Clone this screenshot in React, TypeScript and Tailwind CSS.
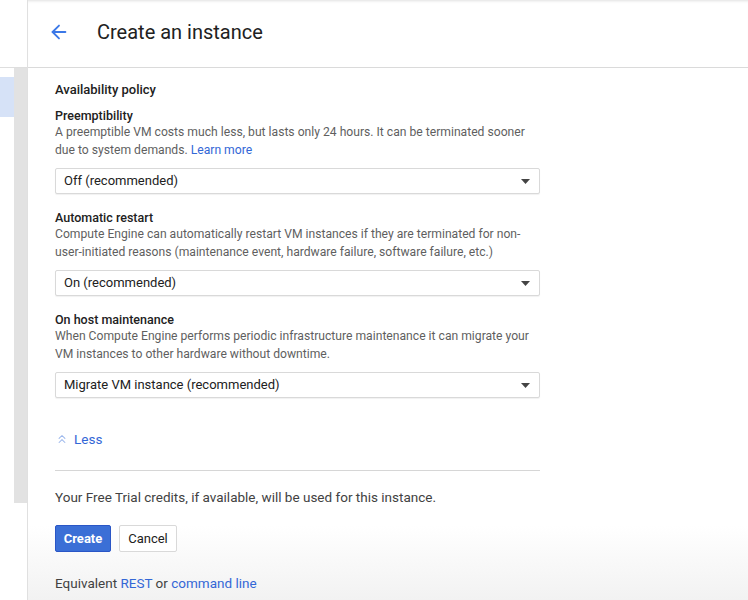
import { ArrowLeft, ChevronsUp } from "lucide-react";

const FONT = { fontFamily: "Roboto, 'Liberation Sans', sans-serif" };

function Select({ value }: { value: string }) {
  return (
    <div className="mt-[9px] flex h-[26px] w-[485px] items-center justify-between rounded-[2px] border border-[#d9d9d9] bg-white pl-[8px] pr-[9px] text-[13px] text-[#212121] shadow-[0_1px_1px_rgba(0,0,0,0.06)]">
      <span>{value}</span>
      <svg width="9" height="5" viewBox="0 0 9 5">
        <path d="M0 0h9L4.5 5z" fill="#444" />
      </svg>
    </div>
  );
}

function Field({ title, children, value, first }: { title: string; children: React.ReactNode; value: string; first?: boolean }) {
  return (
    <div className={first ? "mt-[9px]" : "mt-[16px]"}>
      <div className="text-[12.5px] font-medium leading-[16px] text-[#212121]">{title}</div>
      <p className="-mt-[1px] text-[12.15px] leading-[18px] text-[#5f5f5f]">{children}</p>
      <Select value={value} />
    </div>
  );
}

export default function App() {
  return (
    <div className="flex h-[600px] w-[748px] overflow-hidden bg-white" style={FONT}>
      {/* left rail */}
      <div className="flex w-[28px] shrink-0 flex-col border-r border-[#e0e0e0]">
        <div className="h-[68px] shrink-0 border-b border-[#dedede] bg-white" />
        <div className="flex flex-1">
          <div className="w-[14px] pt-[9px]">
            <div className="h-[40px] bg-[#d6e2f7]" />
          </div>
          <div className="flex w-[13px] flex-col">
            <div className="h-[435px] bg-[#e2e2e2]" />
          </div>
        </div>
      </div>

      <div className="flex flex-1 flex-col">
        {/* header */}
        <div className="flex h-[68px] shrink-0 items-center border-b border-[#dadada] bg-white pb-[4px] pl-[20px] shadow-[inset_0_3px_3px_-2px_rgba(0,0,0,0.12)]">
          <ArrowLeft className="h-[22px] w-[22px] text-[#3b78e7]" strokeWidth={2} />
          <h1 className="ml-[27px] text-[20px] text-[#212121]">Create an instance</h1>
        </div>

        {/* body */}
        <div className="flex-1 bg-gradient-to-b from-white from-[86%] to-[#f2f2f2] pl-[27px]">
          <div className="pt-[13px] text-[13px] font-medium leading-[18px] text-[#212121]">Availability policy</div>

          <Field first title="Preemptibility" value="Off (recommended)">
            A preemptible VM costs much less, but lasts only 24 hours. It can be terminated sooner
            <br />
            due to system demands. <span className="text-[#3367d6]">Learn more</span>
          </Field>

          <Field title="Automatic restart" value="On (recommended)">
            Compute Engine can automatically restart VM instances if they are terminated for non-
            <br />
            user-initiated reasons (maintenance event, hardware failure, software failure, etc.)
          </Field>

          <Field title="On host maintenance" value="Migrate VM instance (recommended)">
            When Compute Engine performs periodic infrastructure maintenance it can migrate your
            <br />
            VM instances to other hardware without downtime.
          </Field>

          <div className="mt-[32px] flex h-[18px] items-center gap-[5px] text-[13.5px] text-[#3367d6]">
            <ChevronsUp className="h-[14px] w-[14px] text-[#9db8ec]" strokeWidth={1.8} />
            <span>Less</span>
          </div>

          <div className="mt-[22px] w-[485px] border-t border-[#d6d6d6]" />

          <p className="mt-[17px] text-[13.5px] leading-[18px] text-[#424242]">
            Your Free Trial credits, if available, will be used for this instance.
          </p>

          <div className="mt-[19px] flex gap-[8px]">
            <button className="h-[27px] w-[56px] rounded-[2px] border border-[#2a56c6] bg-[#3b6fd6] text-[13px] font-bold text-white">
              Create
            </button>
            <button className="h-[27px] w-[58px] rounded-[2px] border border-[#d9d9d9] bg-white text-[13px] text-[#212121]">
              Cancel
            </button>
          </div>

          <p className="mt-[22px] text-[13.5px] leading-[18px] text-[#424242]">
            Equivalent <span className="text-[#3367d6]">REST</span> or{" "}
            <span className="text-[#3367d6]">command line</span>
          </p>
        </div>
      </div>
    </div>
  );
}
